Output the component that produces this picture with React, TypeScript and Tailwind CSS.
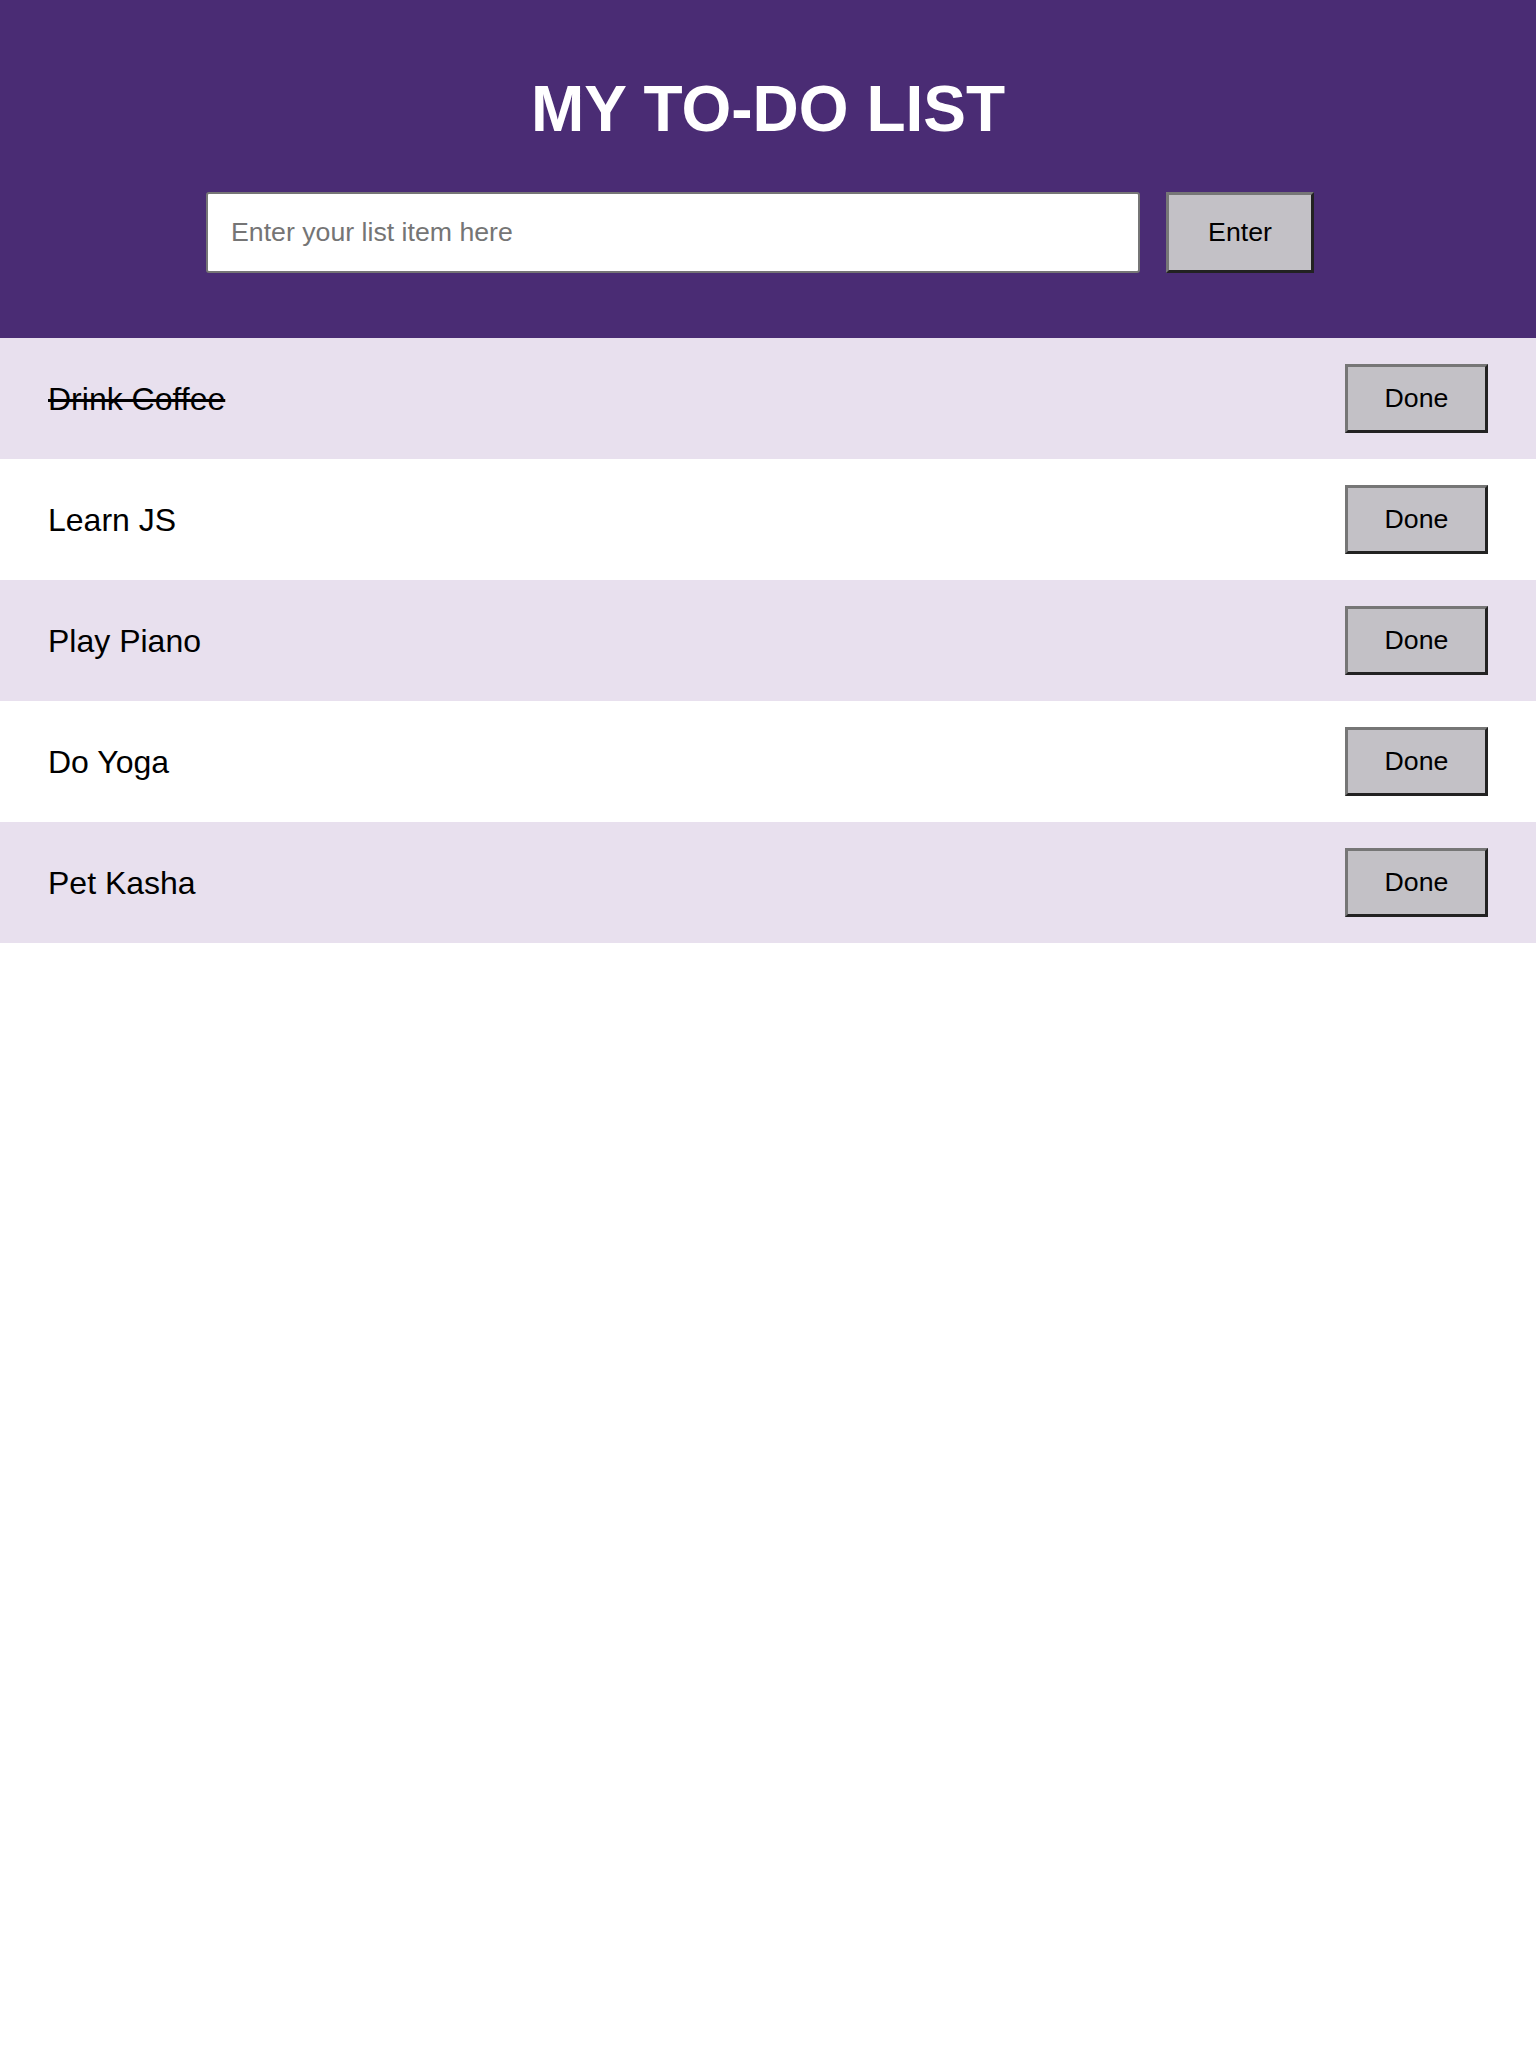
import React from "react";

const items = [
  { text: "Drink Coffee", done: true },
  { text: "Learn JS", done: false },
  { text: "Play Piano", done: false },
  { text: "Do Yoga", done: false },
  { text: "Pet Kasha", done: false },
];

export default function App() {
  return (
    <div className="min-h-[2048px] bg-white" style={{ fontFamily: '"Liberation Sans", Arial, Helvetica, sans-serif' }}>
      <header className="h-[338px] bg-[#4a2c74] pt-[77px] flex flex-col items-center">
        <h1 className="text-white font-bold text-[64px] leading-none">MY TO-DO LIST</h1>
        <div className="mt-[51px] w-full flex justify-center pr-[16px]">
          <div className="flex gap-[26px]">
            <input
              type="text"
              placeholder="Enter your list item here"
              className="w-[934px] h-[81px] bg-white border-2 border-[#767676] rounded-[3px] pl-[23px] text-[26.7px] text-black placeholder:text-[#757575] outline-none"
            />
            <button className="w-[148px] h-[81px] bg-[#c3c1c6] border-[3px] border-t-[#767676] border-l-[#767676] border-b-[#222222] border-r-[#222222] text-[26.7px] text-black">
              Enter
            </button>
          </div>
        </div>
      </header>
      <ul>
        {items.map((it, i) => (
          <li
            key={it.text}
            className={
              (i % 2 === 0 ? "bg-[#e8e0ee] " : "bg-white ") +
              "h-[121px] flex items-center justify-between pl-[48px] pr-[48px]"
            }
          >
            <span className={(it.done ? "line-through " : "") + "text-[32px] text-black"}>{it.text}</span>
            <button className="w-[143px] h-[69px] bg-[#c3c1c6] border-[3px] border-t-[#767676] border-l-[#767676] border-b-[#222222] border-r-[#222222] text-[26.7px] text-black">
              Done
            </button>
          </li>
        ))}
      </ul>
    </div>
  );
}
